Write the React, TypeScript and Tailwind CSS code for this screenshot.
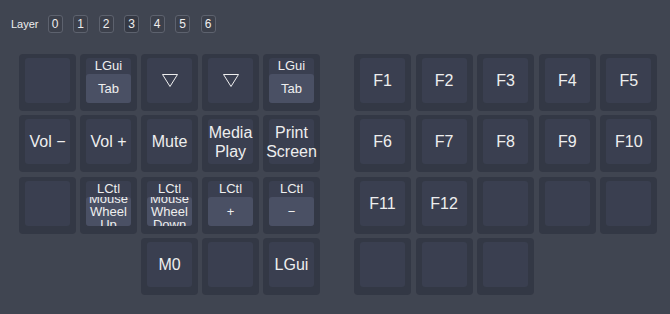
import React from "react";

type KeyDef =
  | { kind: "empty" }
  | { kind: "none" }
  | { kind: "text"; label: string }
  | { kind: "tri" }
  | { kind: "dual"; top: string; bottom: string[] };

const E: KeyDef = { kind: "empty" };
const N: KeyDef = { kind: "none" };
const t = (label: string): KeyDef => ({ kind: "text", label });

const leftKeys: KeyDef[] = [
  E,
  { kind: "dual", top: "LGui", bottom: ["Tab"] },
  { kind: "tri" },
  { kind: "tri" },
  { kind: "dual", top: "LGui", bottom: ["Tab"] },
  t("Vol −"),
  t("Vol +"),
  t("Mute"),
  t("Media\nPlay"),
  t("Print\nScreen"),
  E,
  { kind: "dual", top: "LCtl", bottom: ["Mouse", "Wheel", "Up"] },
  { kind: "dual", top: "LCtl", bottom: ["Mouse", "Wheel", "Down"] },
  { kind: "dual", top: "LCtl", bottom: ["+"] },
  { kind: "dual", top: "LCtl", bottom: ["−"] },
  N,
  N,
  t("M0"),
  E,
  t("LGui"),
];

const rightKeys: KeyDef[] = [
  t("F1"), t("F2"), t("F3"), t("F4"), t("F5"),
  t("F6"), t("F7"), t("F8"), t("F9"), t("F10"),
  t("F11"), t("F12"), E, E, E,
  E, E, E, N, N,
];

const Key = ({ k }: { k: KeyDef }) => {
  if (k.kind === "none") return <div className="w-[57px] h-[57px]" />;
  return (
    <div className="w-[57px] h-[57px] rounded-[4px] bg-[#333845] pt-[4px] px-[6px] pb-[8px]">
      <div className="w-full h-full rounded-[3px] bg-[#3a3f50] flex flex-col items-center justify-center text-[#eeeeee]">
        {k.kind === "text" && (
          <div className="text-[16px] leading-[19px] text-center whitespace-pre">{k.label}</div>
        )}
        {k.kind === "tri" && (
          <svg width="16" height="13" viewBox="0 0 16 13">
            <polygon points="0.5,0.5 15.5,0.5 8,12.5" fill="none" stroke="#eeeeee" strokeWidth="1" />
          </svg>
        )}
        {k.kind === "dual" && (
          <>
            <div className="h-[16px] w-full text-center text-[13px] leading-[16px] shrink-0">{k.top}</div>
            <div className="flex-1 min-h-0 w-full rounded-[3px] bg-[#4a5064] overflow-hidden flex flex-col items-center justify-center text-[13px] leading-[13px]">
              {k.bottom.map((b) => (
                <div key={b} className="shrink-0">{b}</div>
              ))}
            </div>
          </>
        )}
      </div>
    </div>
  );
};

export default function App() {
  return (
    <div
      className="w-[670px] h-[314px] bg-[#404551] text-[#eeeeee] overflow-hidden"
      style={{ fontFamily: '"Liberation Sans", Arial, sans-serif' }}
    >
      {/* Layer selector */}
      <div className="flex items-center pl-[11px] pt-[15px] h-[33px]">
        <span className="text-[11px] mr-[9px]">Layer</span>
        <div className="flex gap-[10.5px]">
          {[0, 1, 2, 3, 4, 5, 6].map((n) => (
            <div
              key={n}
              className={
                "w-[15px] h-[18px] rounded-[3px] border border-[#5d626e] flex items-center justify-center text-[12px] " +
                (n === 3 ? "bg-[#353944]" : "bg-[#3c404b]")
              }
            >
              {n}
            </div>
          ))}
        </div>
      </div>

      {/* Keymap */}
      <div className="flex pl-[19px] pt-[21px] gap-[34px]">
        <div className="grid grid-cols-[repeat(5,57px)] gap-x-[4px] gap-y-[4.3px]">
          {leftKeys.map((k, i) => (
            <Key key={i} k={k} />
          ))}
        </div>
        <div className="grid grid-cols-[repeat(5,57px)] gap-x-[4.6px] gap-y-[4.3px]">
          {rightKeys.map((k, i) => (
            <Key key={i} k={k} />
          ))}
        </div>
      </div>
    </div>
  );
}
